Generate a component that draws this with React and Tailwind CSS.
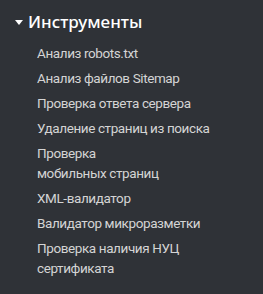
import React from 'react';

const items = [
  'Анализ robots.txt',
  'Анализ файлов Sitemap',
  'Проверка ответа сервера',
  'Удаление страниц из поиска',
  'Проверка\nмобильных страниц',
  'XML-валидатор',
  'Валидатор микроразметки',
  'Проверка наличия НУЦ сертификата',
];

export default function App() {
  return (
    <div className="w-[263px] h-[294px] bg-[#2f3237] font-['Noto_Sans',sans-serif] overflow-hidden">
      <div className="flex items-center pl-[15px] pt-[9px]">
        <svg width="8" height="5" viewBox="0 0 8 5" className="mr-[5px] mt-[1px]">
          <path d="M0 0h8L4 5z" fill="#ffffff" />
        </svg>
        <span className="text-white text-[17px] font-medium leading-[26px]">Инструменты</span>
      </div>
      <ul className="pl-[37px] pr-[20px] pt-[8px] flex flex-col gap-[5px] font-['Roboto',sans-serif]">
        {items.map((item) => (
          <li key={item} className="text-[#d4d4d4] text-[13.5px] tracking-[-0.4px] leading-[20px] whitespace-pre-line">
            {item}
          </li>
        ))}
      </ul>
    </div>
  );
}
